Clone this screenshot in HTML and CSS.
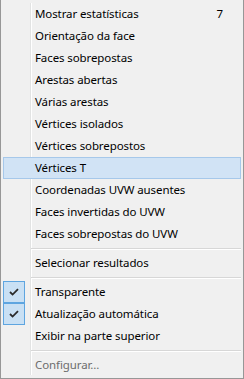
FILE: index.html
```html
<!DOCTYPE html>
<html lang="pt">
<head>
<meta charset="utf-8">
<title>Menu</title>
<link rel="stylesheet" href="styles.css">
</head>
<body>
<div class="menu">
  <div class="item"><span class="gut"></span><span class="label">Mostrar estatísticas</span><span class="key">7</span></div>
  <div class="item"><span class="gut"></span><span class="label">Orientação da face</span></div>
  <div class="item"><span class="gut"></span><span class="label">Faces sobrepostas</span></div>
  <div class="item"><span class="gut"></span><span class="label">Arestas abertas</span></div>
  <div class="item"><span class="gut"></span><span class="label">Várias arestas</span></div>
  <div class="item"><span class="gut"></span><span class="label">Vértices isolados</span></div>
  <div class="item"><span class="gut"></span><span class="label">Vértices sobrepostos</span></div>
  <div class="item hover"><span class="gut"></span><span class="label">Vértices T</span></div>
  <div class="item"><span class="gut"></span><span class="label">Coordenadas UVW ausentes</span></div>
  <div class="item"><span class="gut"></span><span class="label">Faces invertidas do UVW</span></div>
  <div class="item"><span class="gut"></span><span class="label">Faces sobrepostas do UVW</span></div>
  <div class="sep"></div>
  <div class="item"><span class="gut"></span><span class="label">Selecionar resultados</span></div>
  <div class="sep"></div>
  <div class="item"><span class="gut"><span class="check"><svg width="10" height="8" viewBox="0 0 10 8"><path d="M1 4 L3.6 6.6 L9 1.2" fill="none" stroke="#2b2b2b" stroke-width="1.8"/></svg></span></span><span class="label">Transparente</span></div>
  <div class="item"><span class="gut"><span class="check"><svg width="10" height="8" viewBox="0 0 10 8"><path d="M1 4 L3.6 6.6 L9 1.2" fill="none" stroke="#2b2b2b" stroke-width="1.8"/></svg></span></span><span class="label">Atualização automática</span></div>
  <div class="item"><span class="gut"></span><span class="label">Exibir na parte superior</span></div>
  <div class="sep"></div>
  <div class="item disabled"><span class="gut"></span><span class="label">Configurar...</span></div>
</div>
</body>
</html>
```
FILE: styles.css
```css
html, body {
  margin: 0;
  padding: 0;
  background: #f0f0f0;
}
.menu {
  width: 244px;
  height: 379px;
  box-sizing: border-box;
  border: 1px solid #979797;
  border-top: none;
  padding: 3px 2px 2px 2px;
  background-color: #f0f0f0;
  background-image: linear-gradient(#e2e3e3, #e2e3e3), linear-gradient(#ffffff, #ffffff);
  background-repeat: no-repeat;
  background-position: 29px 3px, 30px 3px;
  background-size: 1px 372px, 1px 372px;
  display: flex;
  flex-direction: column;
  font-family: "Noto Sans", "Open Sans", sans-serif;
  font-size: 11.5px;
  letter-spacing: -0.1px;
  color: #000;
}
.item {
  height: 22px;
  display: flex;
  align-items: center;
  position: relative;
}
.item.hover {
  background: #d1e3f5;
  box-shadow: inset 0 0 0 1px #a6c8ea;
}
.gut {
  width: 27px;
  height: 22px;
  flex: none;
  display: flex;
}
.check {
  width: 22px;
  height: 22px;
  box-sizing: border-box;
  border: 1px solid #5ea5e0;
  background: #c9e0f4;
  display: flex;
  align-items: center;
  justify-content: center;
}
.label {
  flex: 1;
  padding-left: 5px;
  white-space: nowrap;
  line-height: 22px;
}
.key {
  padding-right: 18px;
  line-height: 22px;
}
.disabled .label {
  color: #6d6d6d;
}
.sep {
  height: 7px;
  box-sizing: border-box;
  padding-top: 3px;
  margin-left: 28px;
}
.sep::before {
  content: "";
  display: block;
  height: 1px;
  background: #d7d7d7;
  border-bottom: 1px solid #ffffff;
}
```
